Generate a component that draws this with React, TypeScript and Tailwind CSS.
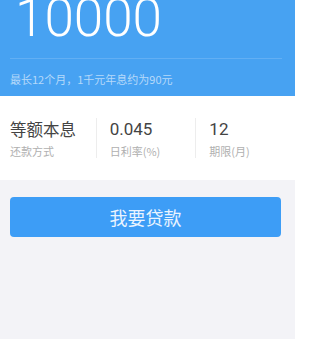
export default function App() {
  const stats = [
    { value: "0.045", label: "日利率(%)" },
    { value: "12", label: "期限(月)" },
  ];

  return (
    <div
      className="flex h-[339px] w-[314px] overflow-hidden bg-white"
      style={{ fontFamily: '"Noto Sans CJK SC", Roboto, sans-serif' }}
    >
      <div className="flex w-[295px] flex-col">
        {/* header */}
        <div className="h-[96px] bg-[#47a2f2] px-[10px]">
          <div
            className="-mt-[12px] pl-[5px] text-[53px] leading-[60px] font-light text-white"
            style={{ fontFamily: "Roboto, sans-serif" }}
          >
            10000
          </div>
          <div className="mt-[10px] h-px w-[272px] bg-white/15" />
          <div className="mt-[13px] text-[11px] leading-[14px] text-white/60">
            最长12个月，1千元年息约为90元
          </div>
        </div>

        {/* stats */}
        <div className="flex h-[84px] items-center bg-white pl-[10px]">
          <div className="w-[86px]">
            <div className="text-[16.5px] leading-[20px] text-[#444]">等额本息</div>
            <div className="mt-[5px] text-[11px] leading-[14px] text-[#b0b0b0]">还款方式</div>
          </div>
          {stats.map((s) => (
            <div
              key={s.label}
              className="flex h-[40px] w-[100px] flex-col justify-center border-l border-[#ededed] pl-[13px]"
            >
              <div
                className="text-[17px] leading-[20px] text-[#444]"
                style={{ fontFamily: "Roboto, sans-serif" }}
              >
                {s.value}
              </div>
              <div className="mt-[5px] text-[11px] leading-[14px] text-[#b0b0b0]">{s.label}</div>
            </div>
          ))}
        </div>

        {/* action */}
        <div className="flex-1 bg-[#f3f3f7] px-[10px] pt-[17px]">
          <button
            type="button"
            className="flex h-[40px] w-[271px] items-center justify-center rounded-[4px] bg-[#3d9df6] text-[18px] text-[#eaf4ff]"
          >
            我要贷款
          </button>
        </div>
      </div>
      <div className="flex-1 bg-white" />
    </div>
  );
}
